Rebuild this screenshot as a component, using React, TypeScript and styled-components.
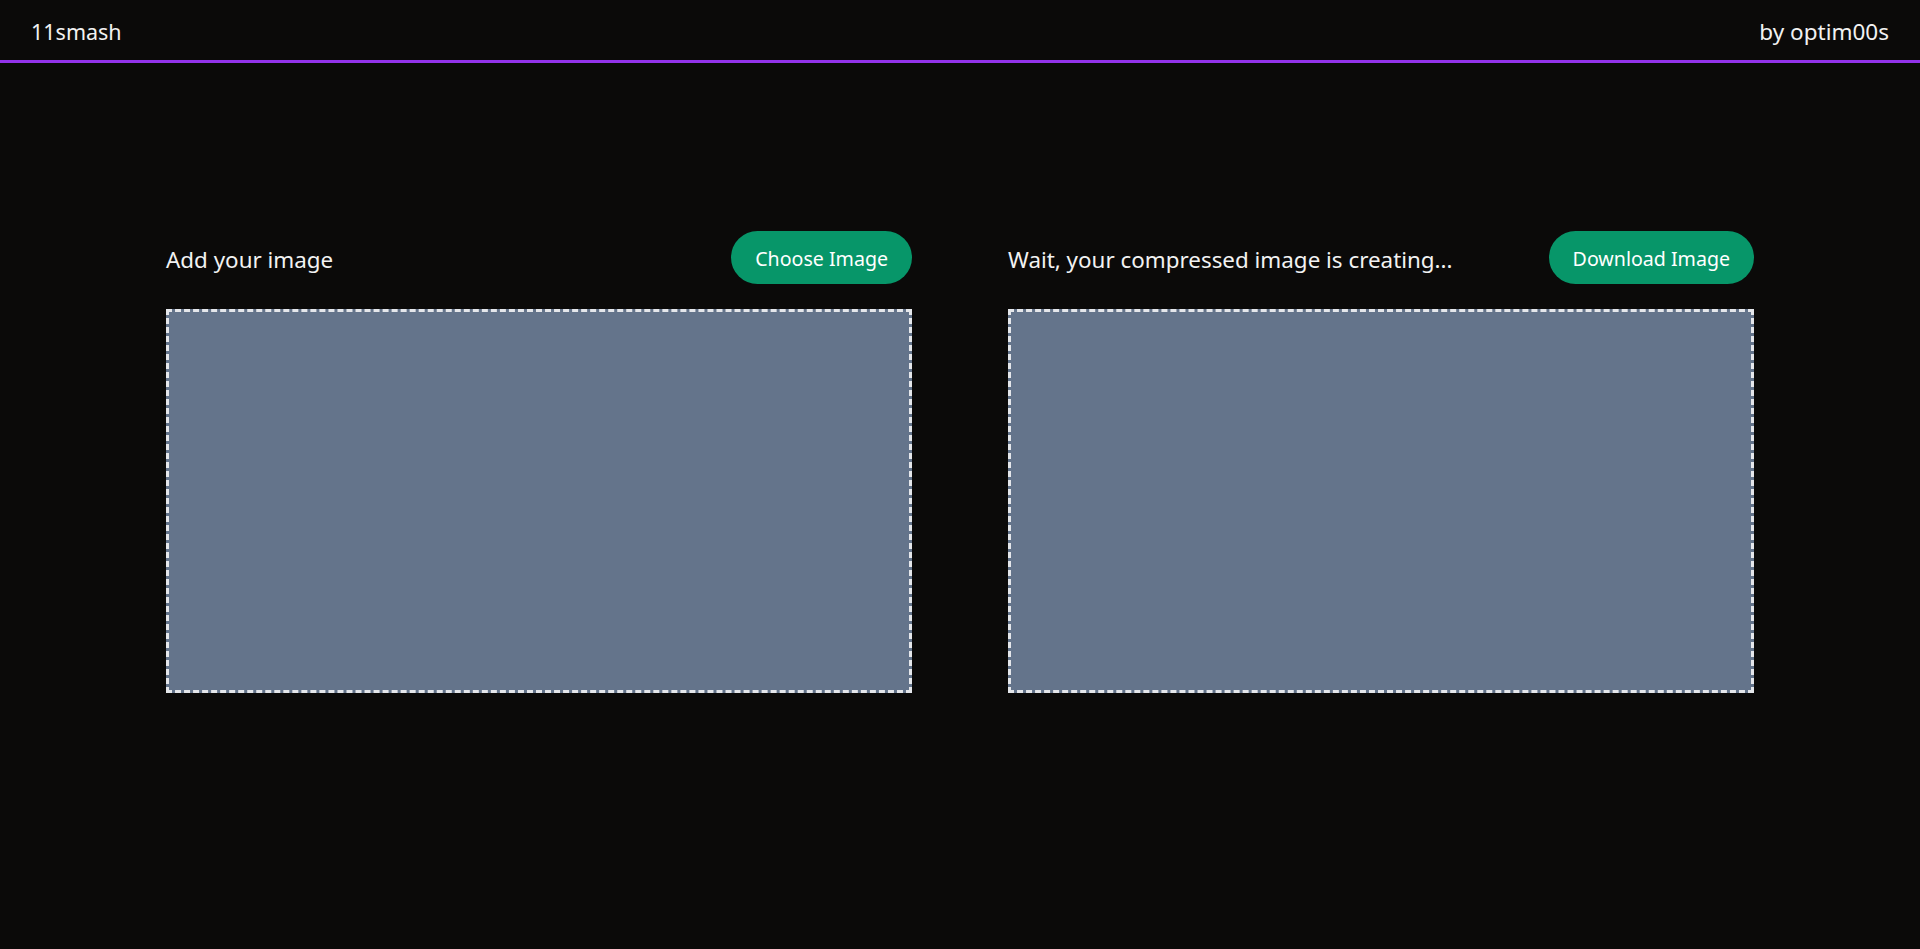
import React from "react";
import styled, { createGlobalStyle } from "styled-components";

const GlobalStyle = createGlobalStyle`
  html, body {
    margin: 0;
    padding: 0;
    background: #0b0a09;
    color: #f5f5f5;
    font-family: "Noto Sans", "Open Sans", sans-serif;
  }
  * { box-sizing: border-box; }
`;

const Page = styled.div`
  min-height: 949px;
  background: #0b0a09;
`;

const Header = styled.header`
  height: 63px;
  display: flex;
  align-items: center;
  justify-content: space-between;
  padding: 2px 31px 0 31px;
  border-bottom: 3px solid #9333ea;
`;

const Brand = styled.div`
  font-size: 21.5px;
  color: #f2f2f2;
`;

const Author = styled.div`
  font-size: 22.5px;
  color: #f2f2f2;
`;

const Main = styled.main`
  padding-top: 168px;
`;

const Grid = styled.div`
  width: 1588px;
  margin: 0 auto;
  display: grid;
  grid-template-columns: 1fr 1fr;
  column-gap: 96px;
`;

const Panel = styled.section`
  display: flex;
  flex-direction: column;
  gap: 25px;
`;

const PanelHead = styled.div`
  height: 53px;
  display: flex;
  align-items: center;
  justify-content: space-between;
`;

const Title = styled.h2`
  margin: 0;
  font-size: 22.4px;
  font-weight: 400;
  color: #f2f2f2;
  padding-top: 4px;
`;

const Button = styled.button`
  height: 53px;
  padding: 2px 24px 0 24px;
  border: none;
  border-radius: 999px;
  background: #079669;
  color: #ffffff;
  font-family: inherit;
  font-size: 19.6px;
  cursor: pointer;
`;

const Drop = styled.div`
  height: 384px;
  background: #64748b;
  border: 3px dashed #e5e7eb;
`;

export default function App() {
  return (
    <Page>
      <GlobalStyle />
      <Header>
        <Brand>11smash</Brand>
        <Author>by optim00s</Author>
      </Header>
      <Main>
        <Grid>
          <Panel>
            <PanelHead>
              <Title>Add your image</Title>
              <Button>Choose Image</Button>
            </PanelHead>
            <Drop />
          </Panel>
          <Panel>
            <PanelHead>
              <Title>Wait, your compressed image is creating...</Title>
              <Button>Download Image</Button>
            </PanelHead>
            <Drop />
          </Panel>
        </Grid>
      </Main>
    </Page>
  );
}
